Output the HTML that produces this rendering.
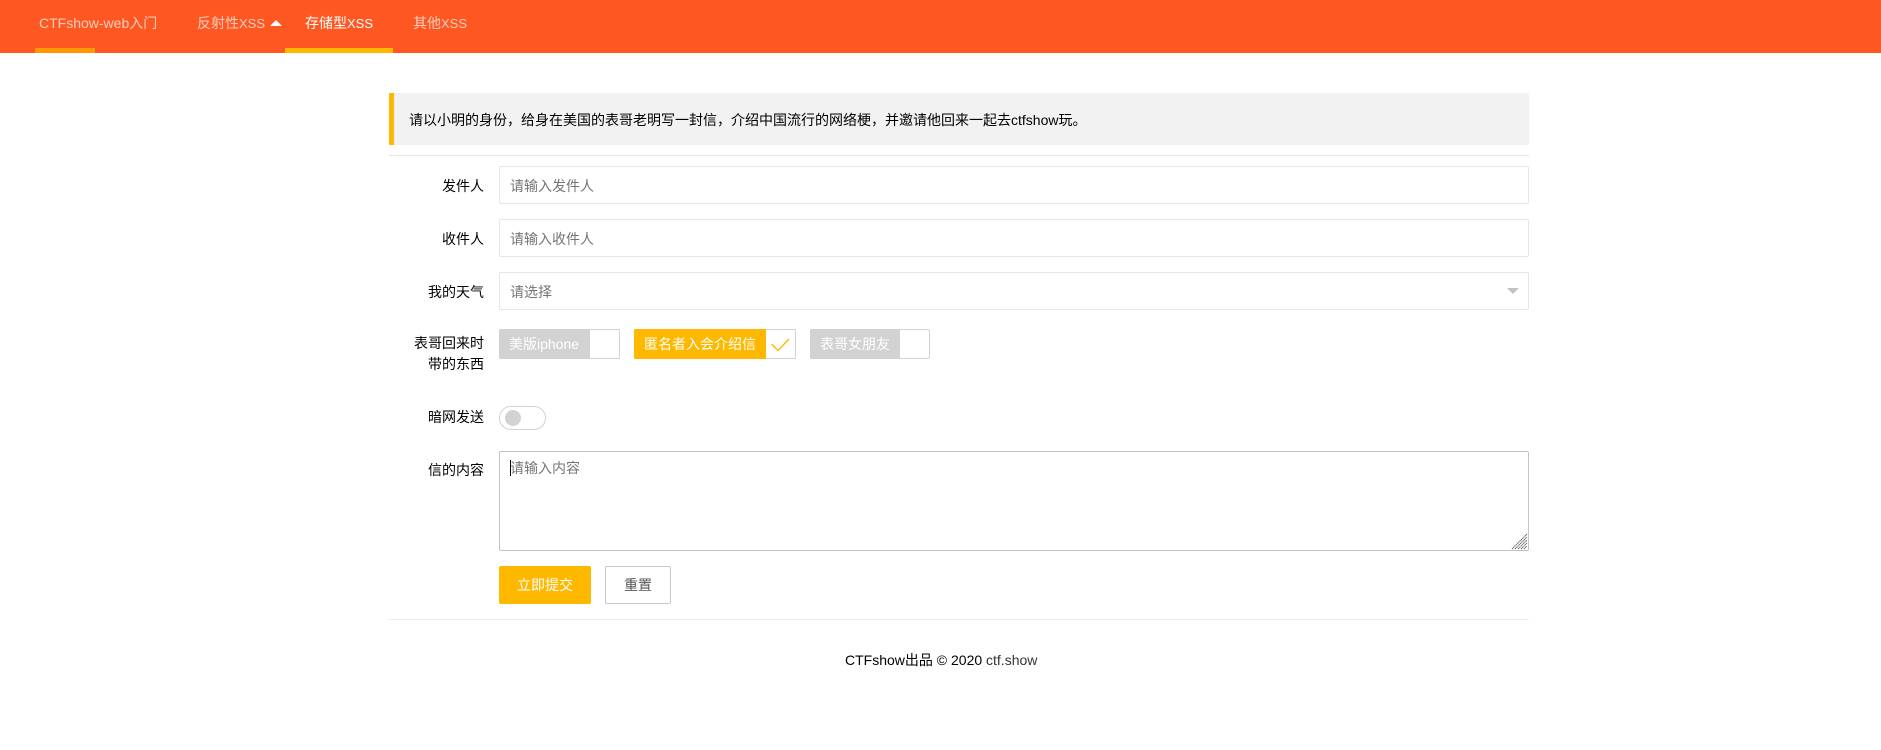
<!DOCTYPE html>
<html lang="zh-CN">
<head>
<meta charset="utf-8">
<title>CTFshow</title>
<style>
html,body{margin:0;padding:0;background:#fff;}
body{position:relative;width:1881px;height:750px;overflow:hidden;font:14px/20px "Liberation Sans","Noto Sans CJK SC",sans-serif;color:#000;}
.a{position:absolute;box-sizing:border-box;white-space:nowrap;}
.nav{left:0;top:0;width:1881px;height:53px;background:#FF5722;}
.ni{top:13px;color:rgba(255,255,255,.7);line-height:20px;}
.ni i{font-style:normal;font-size:13px;}
.lab{left:389px;width:95px;text-align:right;line-height:22px;}
.inp{left:499px;width:1030px;height:38px;border:1px solid #e6e6e6;border-radius:2px;background:#fff;color:#757575;padding-left:10px;line-height:38px;}
.cb{top:329px;height:30px;border:1px solid #d2d2d2;border-radius:2px;background:#fff;}
.cbt{top:329px;height:30px;background:#d2d2d2;color:#fff;border-radius:2px 0 0 2px;line-height:30px;padding-left:10px;}
</style>
</head>
<body>
<div class="a nav"></div>
<div class="a ni" style="left:39px">CTFshow-web入门</div>
<div class="a" style="left:35px;top:48px;width:60px;height:5px;background:#FF9800"></div>
<div class="a ni" style="left:197px">反射性<i>XSS</i></div>
<div class="a" style="left:270px;top:20px;width:0;height:0;border-left:6px solid transparent;border-right:6px solid transparent;border-bottom:6px solid #fff"></div>
<div class="a ni" style="left:305px;color:#fff">存储型<i>XSS</i></div>
<div class="a" style="left:285px;top:48px;width:108px;height:5px;background:#FFB800"></div>
<div class="a ni" style="left:413px">其他<i>XSS</i></div>

<div class="a" style="left:389px;top:93px;width:1140px;height:52px;background:#f2f2f2;border-left:5px solid #FFB800;border-radius:0 2px 2px 0;padding-left:15px;line-height:54px">请以小明的身份，给身在美国的表哥老明写一封信，介绍中国流行的网络梗，并邀请他回来一起去ctfshow玩。</div>
<div class="a" style="left:389px;top:155px;width:1140px;height:1px;background:#e6e6e6"></div>

<div class="a lab" style="top:175px">发件人</div>
<div class="a inp" style="top:166px">请输入发件人</div>
<div class="a lab" style="top:228px">收件人</div>
<div class="a inp" style="top:219px">请输入收件人</div>
<div class="a lab" style="top:281px">我的天气</div>
<div class="a inp" style="top:272px">请选择</div>
<div class="a" style="left:1507px;top:288px;width:0;height:0;border-left:6px solid transparent;border-right:6px solid transparent;border-top:6px solid #c2c2c2"></div>

<div class="a lab" style="top:333px;white-space:normal;line-height:21px">表哥回来时<br>带的东西</div>
<div class="a cb" style="left:499px;width:121px"></div>
<div class="a cbt" style="left:499px;width:91px">美版iphone</div>
<div class="a cb" style="left:634px;width:162px"></div>
<div class="a cbt" style="left:634px;width:132px;background:#FFB800">匿名者入会介绍信</div>
<svg class="a" style="left:770px;top:338px" width="22" height="14" viewBox="0 0 22 14"><path d="M1.5 6L8 12.5L19 1" fill="none" stroke="#FFB800" stroke-width="1.4"/></svg>
<div class="a cb" style="left:810px;width:120px"></div>
<div class="a cbt" style="left:810px;width:90px">表哥女朋友</div>

<div class="a lab" style="top:406px">暗网发送</div>
<div class="a" style="left:499px;top:406px;width:47px;height:24px;border:1px solid #d2d2d2;border-radius:20px;background:#fff"></div>
<div class="a" style="left:505px;top:410px;width:16px;height:16px;border-radius:50%;background:#d2d2d2"></div>

<div class="a lab" style="top:459px">信的内容</div>
<div class="a" style="left:499px;top:451px;width:1030px;height:100px;border:1px solid #c2c2c2;border-radius:2px;background:#fff;color:#757575;padding:6px 0 0 10px;line-height:20px">请输入内容</div>
<div class="a" style="left:510px;top:460px;width:1px;height:16px;background:#000"></div>
<svg class="a" style="left:1511px;top:533px" width="17" height="17" viewBox="0 0 17 17"><path d="M1 16L16 1M4 16L16 4M7 16L16 7M10 16L16 10M13 16L16 13" stroke="#666" stroke-width="1" stroke-dasharray="1.4 .4" fill="none"/></svg>

<div class="a" style="left:499px;top:566px;width:92px;height:38px;background:#FFB800;color:#fff;border-radius:2px;text-align:center;line-height:38px">立即提交</div>
<div class="a" style="left:605px;top:566px;width:66px;height:38px;background:#fff;color:#555;border:1px solid #c9c9c9;border-radius:2px;text-align:center;line-height:36px">重置</div>

<div class="a" style="left:389px;top:619px;width:1140px;height:1px;background:#eee"></div>
<div class="a" style="left:845px;top:650px">CTFshow出品 © 2020 <span style="color:#333">ctf.show</span></div>
</body>
</html>
